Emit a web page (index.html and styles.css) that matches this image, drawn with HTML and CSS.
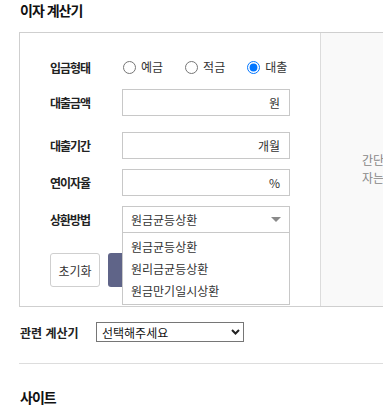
FILE: index.html
```html
<!DOCTYPE html>
<html lang="ko">
<head>
<meta charset="utf-8">
<title>이자 계산기</title>
<link rel="stylesheet" href="styles.css">
</head>
<body>
<h2 class="title">이자 계산기</h2>
<div class="calc-box">
  <div class="calc-form">
    <div class="row row-radio">
      <span class="label">입금형태</span>
      <div class="radios">
        <label class="radio"><input type="radio" name="kind">예금</label>
        <label class="radio"><input type="radio" name="kind">적금</label>
        <label class="radio"><input type="radio" name="kind" checked>대출</label>
      </div>
    </div>
    <div class="row row-first">
      <span class="label">대출금액</span>
      <div class="field"><input class="field-input" type="text"><span class="unit">원</span></div>
    </div>
    <div class="row row-gap">
      <span class="label">대출기간</span>
      <div class="field"><input class="field-input" type="text"><span class="unit">개월</span></div>
    </div>
    <div class="row row-gap">
      <span class="label">연이자율</span>
      <div class="field"><input class="field-input" type="text"><span class="unit">%</span></div>
    </div>
    <div class="row row-gap">
      <span class="label">상환방법</span>
      <div class="select-wrap">
        <div class="select">
          <span>원금균등상환</span>
          <svg class="caret" width="10" height="5" viewBox="0 0 10 5"><path d="M0 0H10L5 5Z" fill="#8a8a8a"/></svg>
        </div>
        <ul class="options">
          <li>원금균등상환</li>
          <li>원리금균등상환</li>
          <li>원금만기일시상환</li>
        </ul>
      </div>
    </div>
    <div class="buttons">
      <button class="btn btn-reset" type="button">초기화</button>
      <button class="btn btn-calc" type="button" aria-label="계산하기"></button>
    </div>
  </div>
  <div class="calc-result">
    <p class="result-text">간단한 이자 계산기입니다.<br>자는 세전 기준으로 계산됩니다.</p>
  </div>
</div>
<div class="related">
  <span class="related-label">관련 계산기</span>
  <div class="related-select">
    <span>선택해주세요</span>
    <svg class="chev" width="9" height="6" viewBox="0 0 9 6"><path d="M1 1L4.5 4.5L8 1" fill="none" stroke="#222" stroke-width="2"/></svg>
  </div>
</div>
<hr class="divider">
<h3 class="site">사이트</h3>
</body>
</html>
```
FILE: styles.css
```css
html, body {
  margin: 0;
  padding: 0;
}
body {
  width: 383px;
  height: 416px;
  overflow: hidden;
  padding-left: 19px;
  box-sizing: border-box;
  font-family: "Noto Sans CJK KR", "Noto Sans", sans-serif;
  color: #222;
  background: #fff;
}
.title {
  margin: 0 0 12px 1px;
  font-size: 14px;
  line-height: 20px;
  font-weight: 700;
  letter-spacing: -1px;
  color: #111;
}
.calc-box {
  display: flex;
  width: 520px;
  border: 1px solid #cfcfcf;
}
.calc-form {
  width: 270px;
  flex: none;
  padding: 23px 0 19px 30px;
}
.row {
  display: flex;
  align-items: center;
}
.row-radio {
  height: 22px;
}
.row-first {
  margin-top: 11px;
}
.row-gap {
  margin-top: 10px;
}
.row:nth-child(3) {
  margin-top: 16px;
}
.label {
  width: 72px;
  flex: none;
  font-size: 12px;
  font-weight: 700;
  letter-spacing: -1px;
  color: #222;
}
.radios {
  display: flex;
  gap: 21px;
}
.radio {
  display: flex;
  align-items: center;
  font-size: 12px;
  line-height: 16px;
  color: #333;
}
.radio input {
  width: 13px;
  height: 13px;
  margin: 0 5px 0 1px;
}
.field {
  width: 168px;
  height: 27px;
  box-sizing: border-box;
  border: 1px solid #c8c8c8;
  display: flex;
  align-items: center;
  padding-right: 9px;
  background: #fff;
}
.field-input {
  flex: 1;
  min-width: 0;
  border: 0;
  outline: none;
  background: transparent;
  height: 100%;
  padding: 0 8px;
  font: inherit;
}
.unit {
  font-size: 12px;
  color: #333;
}
.select-wrap {
  position: relative;
  width: 168px;
}
.select {
  height: 27px;
  box-sizing: border-box;
  border: 1px solid #c8c8c8;
  display: flex;
  align-items: center;
  justify-content: space-between;
  padding: 0 8px 0 8px;
  font-size: 12px;
  color: #333;
  background: #fff;
}
.caret {
  display: block;
}
.options {
  position: absolute;
  left: 0;
  top: 26px;
  z-index: 2;
  width: 168px;
  box-sizing: border-box;
  margin: 0;
  padding: 3px 0 2px;
  list-style: none;
  border: 1px solid #c8c8c8;
  background: #fff;
}
.options li {
  height: 22px;
  line-height: 22px;
  padding-left: 8px;
  font-size: 12px;
  color: #333;
}
.buttons {
  display: flex;
  gap: 8px;
  margin-top: 20px;
}
.btn {
  height: 34px;
  box-sizing: border-box;
  border-radius: 3px;
  font-family: inherit;
  font-size: 12px;
  padding: 0;
}
.btn-reset {
  width: 50px;
  border: 1px solid #cfcfcf;
  background: #fff;
  color: #333;
}
.btn-calc {
  width: 90px;
  border: 0;
  background: #5f6488;
  color: #fff;
}
.calc-result {
  flex: 1;
  border-left: 1px solid #dcdcdc;
  background: #f9f9f9;
  padding: 118px 0 0 41px;
}
.result-text {
  margin: 0;
  font-size: 12px;
  line-height: 18px;
  color: #888;
  white-space: nowrap;
}
.related {
  display: flex;
  align-items: center;
  margin-top: 15px;
  height: 20px;
}
.related-label {
  width: 76px;
  flex: none;
  padding-left: 1px;
  font-size: 12px;
  font-weight: 700;
  color: #222;
}
.related-select {
  width: 148px;
  height: 20px;
  box-sizing: border-box;
  border: 1px solid #767676;
  display: flex;
  align-items: center;
  justify-content: space-between;
  padding: 0 3px 0 5px;
  font-size: 12px;
  color: #111;
}
.chev {
  display: block;
}
.divider {
  margin: 21px 0 0 0;
  width: 400px;
  border: 0;
  border-top: 1px solid #dddddd;
  height: 0;
}
.site {
  margin: 23px 0 0 1px;
  font-size: 14px;
  line-height: 20px;
  font-weight: 700;
  letter-spacing: -1px;
  color: #111;
}
```
